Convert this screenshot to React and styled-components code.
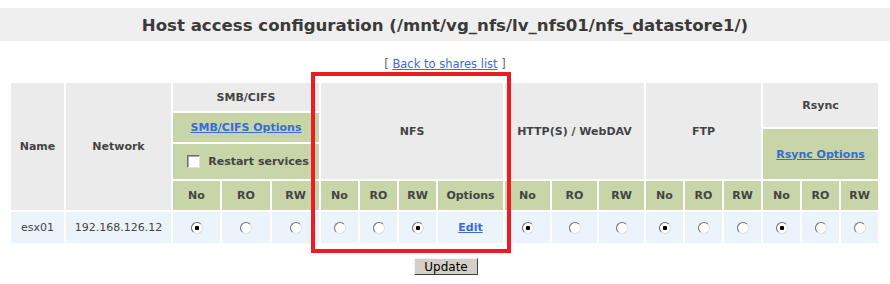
import React from 'react';
import styled, { createGlobalStyle } from 'styled-components';

const GlobalStyle = createGlobalStyle`
  html, body {
    margin: 0;
    padding: 0;
    background: #fff;
  }
  body {
    font-family: "DejaVu Sans", Verdana, sans-serif;
    font-size: 11px;
    color: #444;
  }
`;

const protocols = [
  { key: 'smb', value: 'No' },
  { key: 'nfs', value: 'RW' },
  { key: 'http', value: 'No' },
  { key: 'ftp', value: 'No' },
  { key: 'rsync', value: 'No' },
];

function App() {
  return (
    <Page>
      <GlobalStyle />
      <TitleBar>Host access configuration (/mnt/vg_nfs/lv_nfs01/nfs_datastore1/)</TitleBar>
      <BackLine>
        [ <BackLink href="#">Back to shares list</BackLink> ]
      </BackLine>
      <TableWrap>
        <Grid>
          <Cell $rs={5} $bold>Name</Cell>
          <Cell $rs={5} $bold>Network</Cell>
          <Cell $cs={3} $bold>SMB/CIFS</Cell>
          <Cell $cs={4} $rs={4} $bold>NFS</Cell>
          <Cell $cs={3} $rs={4} $bold>HTTP(S) / WebDAV</Cell>
          <Cell $cs={3} $rs={4} $bold>FTP</Cell>
          <Cell $cs={3} $rs={2} $bold>Rsync</Cell>
          <Cell $cs={3} $rs={2} $tone="green"><Link href="#">SMB/CIFS Options</Link></Cell>
          <Cell $cs={3} $rs={2} $tone="green"><Link href="#">Rsync Options</Link></Cell>
          <Cell $cs={3} $tone="green" $bold>
            <Restart>
              <Check type="checkbox" />
              <span>Restart services</span>
            </Restart>
          </Cell>

          {['No', 'RO', 'RW'].map(v => <Cell key={'smb' + v} $tone="green" $bold>{v}</Cell>)}
          {['No', 'RO', 'RW', 'Options'].map(v => <Cell key={'nfs' + v} $tone="green" $bold>{v}</Cell>)}
          {['http', 'ftp', 'rsync'].map(p =>
            ['No', 'RO', 'RW'].map(v => <Cell key={p + v} $tone="green" $bold>{v}</Cell>)
          )}

          <Cell $tone="row">esx01</Cell>
          <Cell $tone="row">192.168.126.12</Cell>
          {protocols.map(p => (
            <React.Fragment key={p.key}>
              {['No', 'RO', 'RW'].map(v => (
                <Cell key={v} $tone="row">
                  <Radio type="radio" name={p.key} defaultChecked={p.value === v} />
                </Cell>
              ))}
              {p.key === 'nfs' && <Cell $tone="row"><Link href="#">Edit</Link></Cell>}
            </React.Fragment>
          ))}
        </Grid>
        <Highlight />
      </TableWrap>
      <Footer>
        <Button>Update</Button>
      </Footer>
    </Page>
  );
}

const Page = styled.div`
  padding-top: 8px;
  width: 890px;
`;

const TitleBar = styled.h1`
  margin: 0;
  height: 33px;
  display: flex;
  align-items: center;
  justify-content: center;
  background: #efefef;
  color: #3b3a38;
  font-size: 16.6px;
  font-weight: bold;
  padding-top: 1px;
  box-sizing: border-box;
`;

const BackLine = styled.div`
  margin-top: 16px;
  height: 14px;
  line-height: 14px;
  text-align: center;
  color: #666;
  font-size: 11.5px;
`;

const BackLink = styled.a`
  color: #3a6ad4;
  text-decoration: underline;
`;

const TableWrap = styled.div`
  position: relative;
  margin: 12px 0 0 11px;
  width: 867px;
`;

const Grid = styled.div`
  display: grid;
  grid-template-columns: 53px 105px 47px 48px 47px 37px 37px 37px 65px 45px 45px 45px 37px 37px 37px 37px 37px 37px;
  grid-template-rows: 28px 14px 13px 35px 29px 31px;
  gap: 2px;
`;

const tones = {
  gray: '#ebebeb',
  green: '#c7d5a9',
  row: '#ecf4fb',
};

const Cell = styled.div`
  grid-column: span ${p => p.$cs || 1};
  grid-row: span ${p => p.$rs || 1};
  display: flex;
  align-items: center;
  justify-content: center;
  background: ${p => tones[p.$tone || 'gray']};
  font-weight: ${p => (p.$bold ? 'bold' : 'normal')};
  white-space: nowrap;
  color: #444;
`;

const Link = styled.a`
  color: #3a6ad4;
  font-weight: bold;
  text-decoration: underline;
`;

const Restart = styled.label`
  display: flex;
  align-items: center;
  gap: 8px;
  margin-left: 4px;
`;

const Check = styled.input`
  appearance: none;
  margin: 0;
  width: 13px;
  height: 13px;
  background: #fff;
  border: 1px solid;
  border-color: #6f6f6f #e2e2e2 #e2e2e2 #6f6f6f;
  box-shadow: inset 1px 1px 0 #a8a8a8;
`;

const Radio = styled.input`
  appearance: none;
  margin: 0;
  width: 12px;
  height: 12px;
  border-radius: 50%;
  border: 1px solid;
  border-color: #6a6a6a #dedede #dedede #6a6a6a;
  background: #fff;
  &:checked {
    background: radial-gradient(circle, #000 0 2px, #fff 2.5px);
  }
`;

const Highlight = styled.div`
  position: absolute;
  left: 300px;
  top: -11px;
  width: 200px;
  height: 181px;
  box-sizing: border-box;
  border: 4px solid #ed1c24;
  pointer-events: none;
`;

const Footer = styled.div`
  display: flex;
  justify-content: center;
  margin-top: 15px;
`;

const Button = styled.button`
  width: 64px;
  height: 17px;
  padding: 0;
  margin-left: 2px;
  font-family: "DejaVu Sans", Verdana, sans-serif;
  font-size: 12px;
  line-height: 14px;
  color: #000;
  background: #d4d0c8;
  border: 1px solid;
  border-color: #f4f4f4 #404040 #404040 #f4f4f4;
`;

export default App;
